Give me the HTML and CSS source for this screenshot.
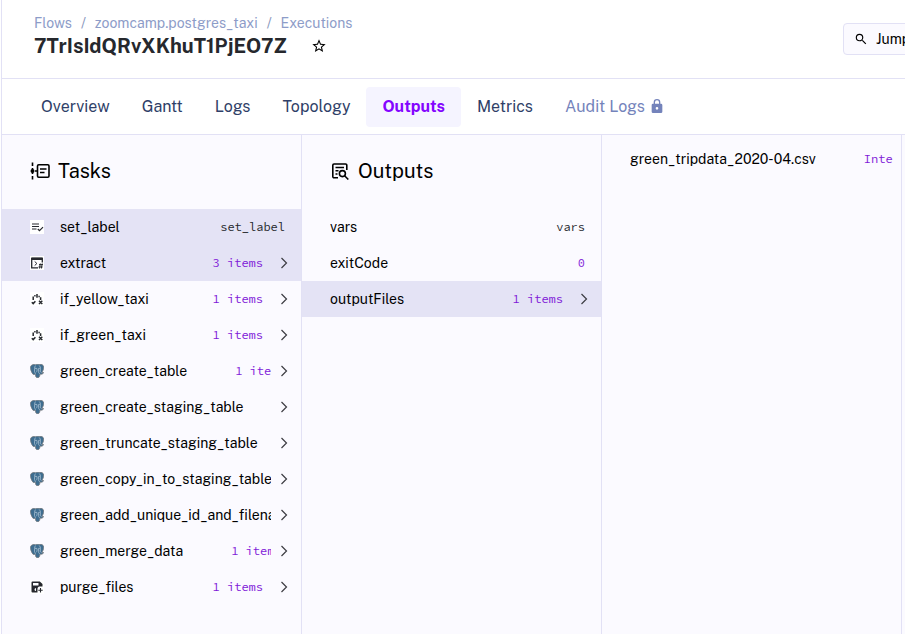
FILE: index.html
```html
<!DOCTYPE html>
<html lang="en">
<head>
<meta charset="utf-8">
<title>Execution outputs</title>
<meta name="viewport" content="width=device-width, initial-scale=1">
<link rel="stylesheet" href="styles.css">
</head>
<body>
<svg class="defs" aria-hidden="true">
  <symbol id="chevron" viewBox="0 0 14 14"><path d="M4.500 2 L9.500 7 L4.500 12" fill="none" stroke="currentColor" stroke-width="1.200"/></symbol>
  <symbol id="switch" viewBox="0 0 14 14">
    <rect width="14" height="14" fill="#fff"/>
    <path d="M7 2V5.800M5.600 3.800H4.200M8.400 4.600H9.800M3.200 4.500V8M10.600 5.200V8M1.800 10.200L3.200 11.600L5.400 9.200M9 8.800L12.300 12M12.300 8.800L9 12" fill="none" stroke="#26282d" stroke-width="1.500"/>
  </symbol>
  <symbol id="postgres" viewBox="0 0 14 14">
    <path d="M.6 2.400C1.600 .3 4.300 .3 5.500 .7C7.200 .1 8.300 .1 9.400 .5C11.400 0 13.400 .7 13.700 3C13.800 5 12.800 7 11.900 8.400L13.700 8.600C13 10.200 11.200 10.500 10 10.100C9.800 12.300 9.500 13.500 7.900 13.700C6 13.900 5.500 12.700 5.400 10.300L3.300 10.500C1.500 8.700 0 4.600 .6 2.400Z" fill="#3e6d90" stroke="#74797d" stroke-width=".8"/>
    <path d="M5.400 1.600C4.300 3.200 4.700 5.500 4.500 7.500C4.600 8.600 5.400 8.800 5.500 9.800M9.200 1.500C11 3.200 10.500 5.500 10.100 7.400L11.500 8.500M5 4.400H6.800C7.300 5.500 7.200 7 6.400 8.200M9.900 4.400H8.600V7.600C8.600 8.800 8.800 9.400 9.800 9.700" fill="none" stroke="#b9cddd" stroke-width=".7"/>
  </symbol>
</svg>

<header class="topbar">
  <div class="heading">
    <nav class="crumbs" aria-label="Breadcrumb">
      <a href="#">Flows</a><span>/</span><a href="#">zoomcamp.postgres_taxi</a><span>/</span><a href="#">Executions</a>
    </nav>
    <div class="title-line">
      <h1>7TrIsIdQRvXKhuT1PjEO7Z</h1>
      <button class="star" type="button" aria-label="Bookmark">
        <svg viewBox="0 0 24 24" width="16" height="16"><path fill="currentColor" d="M12 15.390L8.240 17.660L9.230 13.380L5.910 10.500L10.290 10.130L12 6.090L13.710 10.130L18.090 10.500L14.770 13.380L15.760 17.660M22 9.240L14.810 8.630L12 2L9.190 8.630L2 9.240L7.450 13.970L5.820 21L12 17.270L18.180 21L16.540 13.970L22 9.240Z"/></svg>
      </button>
    </div>
  </div>
  <button class="jump" type="button">
    <svg viewBox="0 0 24 24" width="14" height="14" aria-hidden="true"><path fill="currentColor" d="M9.500 3A6.500 6.500 0 0 1 16 9.500C16 11.110 15.410 12.590 14.440 13.730L14.710 14H15.500L21 19.500L19.500 21L14 15.500V14.710L13.730 14.440C12.590 15.410 11.110 16 9.500 16A6.500 6.500 0 0 1 9.500 3M9.500 5A4.500 4.500 0 1 0 9.500 14A4.500 4.500 0 0 0 9.500 5Z"/></svg>
    <span>Jump to...</span>
  </button>
</header>

<nav class="tabs" aria-label="Execution">
  <a href="#">Overview</a>
  <a href="#">Gantt</a>
  <a href="#">Logs</a>
  <a href="#">Topology</a>
  <a href="#" class="active" aria-current="page">Outputs</a>
  <a href="#">Metrics</a>
  <a href="#" class="locked">Audit Logs
    <svg viewBox="0 0 24 24" width="16" height="16" aria-hidden="true"><path fill="currentColor" d="M12 16A2 2 0 0 0 14 14A2 2 0 0 0 12 12A2 2 0 0 0 10 14A2 2 0 0 0 12 16M18 7A2 2 0 0 1 20 9V19A2 2 0 0 1 18 21H6A2 2 0 0 1 4 19V9A2 2 0 0 1 6 7H7V5A5 5 0 0 1 17 5V7H18M12 2A3 3 0 0 0 9 5V7H15V5A3 3 0 0 0 12 2Z"/></svg>
  </a>
</nav>

<main class="columns">
  <section class="column">
    <h2>
      <svg viewBox="0 0 20 20" width="20" height="20" aria-hidden="true"><g fill="none" stroke="currentColor" stroke-width="1.600"><path d="M2.500 1.500V5M2.500 7V13M2.500 15V18.500M5 10H7.500"/><rect x="7.500" y="3.800" width="11.500" height="12.400" rx="1.200"/><path d="M10 8H16.500M10 11.500H14.500"/></g><circle cx="2.500" cy="10" r="2" fill="currentColor"/></svg>
      Tasks
    </h2>
    <ul>
      <li><button class="row selected" type="button">
        <svg class="icon" viewBox="0 0 14 14"><rect width="14" height="14" fill="#fff"/><path d="M2 4H9M2 6.500H9M2 9H6.500M7.800 9L9.500 10.700L13 7.200" fill="none" stroke="#26282d" stroke-width="1.200"/></svg>
        <span class="content"><span>set_label</span><code class="plain">set_label</code></span>
      </button></li>
      <li><button class="row selected" type="button">
        <svg class="icon" viewBox="0 0 14 14"><rect width="14" height="14" fill="#fff"/><path d="M8 11.800H1.700V2.500H12.300V6.500" fill="none" stroke="#26282d" stroke-width="1.300"/><path d="M1.500 1.500H12.500V4H1.500Z" fill="#26282d"/><path d="M4.700 5.500L6.900 7.500L4.700 9.500M9 8.600H13M8.500 11H12.500M10.300 7.500L9.500 12.500M12.200 7.500L11.400 12.500" fill="none" stroke="#26282d" stroke-width="1"/></svg>
        <span class="content"><span>extract</span><code>3 items</code></span>
        <svg class="chevron"><use href="#chevron"/></svg>
      </button></li>
      <li><button class="row" type="button"><svg class="icon"><use href="#switch"/></svg><span class="content"><span>if_yellow_taxi</span><code>1 items</code></span><svg class="chevron"><use href="#chevron"/></svg></button></li>
      <li><button class="row" type="button"><svg class="icon"><use href="#switch"/></svg><span class="content"><span>if_green_taxi</span><code>1 items</code></span><svg class="chevron"><use href="#chevron"/></svg></button></li>
      <li><button class="row" type="button"><svg class="icon"><use href="#postgres"/></svg><span class="content"><span>green_create_table</span><code>1 items</code></span><svg class="chevron"><use href="#chevron"/></svg></button></li>
      <li><button class="row" type="button"><svg class="icon"><use href="#postgres"/></svg><span class="content"><span>green_create_staging_table</span></span><svg class="chevron"><use href="#chevron"/></svg></button></li>
      <li><button class="row" type="button"><svg class="icon"><use href="#postgres"/></svg><span class="content"><span>green_truncate_staging_table</span></span><svg class="chevron"><use href="#chevron"/></svg></button></li>
      <li><button class="row" type="button"><svg class="icon"><use href="#postgres"/></svg><span class="content"><span>green_copy_in_to_staging_table</span></span><svg class="chevron"><use href="#chevron"/></svg></button></li>
      <li><button class="row" type="button"><svg class="icon"><use href="#postgres"/></svg><span class="content"><span>green_add_unique_id_and_filename</span></span><svg class="chevron"><use href="#chevron"/></svg></button></li>
      <li><button class="row" type="button"><svg class="icon"><use href="#postgres"/></svg><span class="content"><span>green_merge_data</span><code>1 items</code></span><svg class="chevron"><use href="#chevron"/></svg></button></li>
      <li><button class="row" type="button">
        <svg class="icon" viewBox="0 0 14 14"><rect width="14" height="14" fill="#fff"/><path fill="#26282d" fill-rule="evenodd" d="M2.500 1.500H9.800L12.500 4V6.500H9C8 7 7.500 7.500 7.500 9V12.500H2.500A1 1 0 0 1 1.500 11.500V2.500A1 1 0 0 1 2.500 1.500ZM3 3V5.500H8.500V3ZM6 8A1.500 1.500 0 1 0 6 11Z"/><path d="M10.500 8V12.400M8.300 10.200H12.700" stroke="#26282d" stroke-width="1.100"/></svg>
        <span class="content"><span>purge_files</span><code>1 items</code></span>
        <svg class="chevron"><use href="#chevron"/></svg>
      </button></li>
    </ul>
  </section>

  <section class="column">
    <h2>
      <svg viewBox="0 0 20 20" width="20" height="20" aria-hidden="true"><g fill="none" stroke="currentColor" stroke-width="1.600"><path d="M8 16.800H4A1.200 1.200 0 0 1 2.800 15.600V4.200A1.200 1.200 0 0 1 4 3H15.600A1.200 1.200 0 0 1 16.800 4.200V9M5.500 6.500H14M5.500 9.800H8.500M5.500 13H7.500"/><circle cx="12.400" cy="12.600" r="3"/><path d="M14.600 14.800L18.300 18.500"/></g></svg>
      Outputs
    </h2>
    <ul>
      <li><button class="row" type="button"><span class="content"><span>vars</span><code class="plain">vars</code></span></button></li>
      <li><button class="row" type="button"><span class="content"><span>exitCode</span><code>0</code></span></button></li>
      <li><button class="row selected" type="button"><span class="content"><span>outputFiles</span><code>1 items</code></span><svg class="chevron"><use href="#chevron"/></svg></button></li>
    </ul>
  </section>

  <section class="column files">
    <ul>
      <li><button class="row" type="button"><span class="content"><span>green_tripdata_2020-04.csv</span><code>Internal</code></span></button></li>
    </ul>
  </section>
</main>
</body>
</html>
```

FILE: styles.css
```css
:root {
  --line: #e2e1f5;
  --panel: #fbfaff;
  --selected: #e4e3f5;
  --purple: #8405ff;
}

* {
  box-sizing: border-box;
}

body {
  margin: 0 0 0 1px;
  min-height: 100vh;
  display: flex;
  flex-direction: column;
  border-left: 1px solid var(--line);
  background: #fff;
  color: #000;
  font: 14px/20px "Public Sans", Inter, sans-serif;
}

button {
  border: 0;
  background: none;
  color: inherit;
  font: inherit;
}

a {
  text-decoration: none;
}

.defs {
  display: none;
}

.topbar {
  display: flex;
  align-items: center;
  justify-content: space-between;
  height: 79px;
  padding-left: 32px;
  overflow: hidden;
  border-bottom: 1px solid var(--line);
}

.heading {
  padding-bottom: 6px;
}

.crumbs {
  display: flex;
  gap: 9px;
  color: #8997bd;
}

.crumbs a {
  color: #8d9cc8;
}

.title-line {
  display: flex;
  align-items: center;
  gap: 24px;
  height: 26px;
}

h1 {
  margin: 0;
  color: #26282d;
  font-size: 20px;
  line-height: 26px;
  font-weight: 700;
}

.star {
  display: flex;
  padding: 0;
}

.jump {
  display: flex;
  align-items: center;
  gap: 8px;
  width: 160px;
  height: 32px;
  margin-right: -98px;
  padding: 0 10px;
  border: 1px solid var(--line);
  border-radius: 4px;
  background: var(--panel);
}

.tabs {
  display: flex;
  padding: 8px 23px 7px;
  border-bottom: 1px solid var(--line);
  font-size: 16px;
}

.tabs a {
  display: flex;
  align-items: center;
  gap: 4px;
  height: 40px;
  padding: 0 16px;
  border-radius: 4px;
  color: #2f3f68;
  white-space: nowrap;
}

.tabs .active {
  background: #f5f4ff;
  color: var(--purple);
  font-weight: 700;
}

.tabs .locked {
  color: #7483bb;
}

.columns {
  flex: 1;
  display: flex;
  background: var(--panel);
}

.column {
  flex: 0 0 300px;
  min-width: 0;
  border-right: 1px solid var(--line);
}

.files {
  padding-top: 6px;
}

h2 {
  display: flex;
  align-items: center;
  gap: 8px;
  height: 74px;
  margin: 0;
  padding: 0 0 2px 28px;
  font-size: 20px;
  font-weight: 400;
}

ul {
  margin: 0;
  padding: 0;
  list-style: none;
}

.row {
  display: flex;
  align-items: center;
  width: 100%;
  height: 36px;
  padding: 0 8px 0 28px;
  text-align: left;
}

.selected {
  background: var(--selected);
}

.icon {
  flex: none;
  width: 14px;
  height: 14px;
  margin-right: 16px;
}

.content {
  flex: 1;
  min-width: 0;
  display: flex;
  align-items: center;
  overflow: hidden;
  white-space: nowrap;
}

.content span {
  flex: none;
}

code {
  flex: none;
  margin-left: auto;
  padding: 0 8px 0 48px;
  color: #8019d8;
  font: 12px/20px "Source Code Pro", "Liberation Mono", monospace;
}

.plain {
  color: #26282d;
}

.chevron {
  flex: none;
  width: 14px;
  height: 14px;
  margin: 0 2px 0 6px;
  color: #3c3c42;
}
```
